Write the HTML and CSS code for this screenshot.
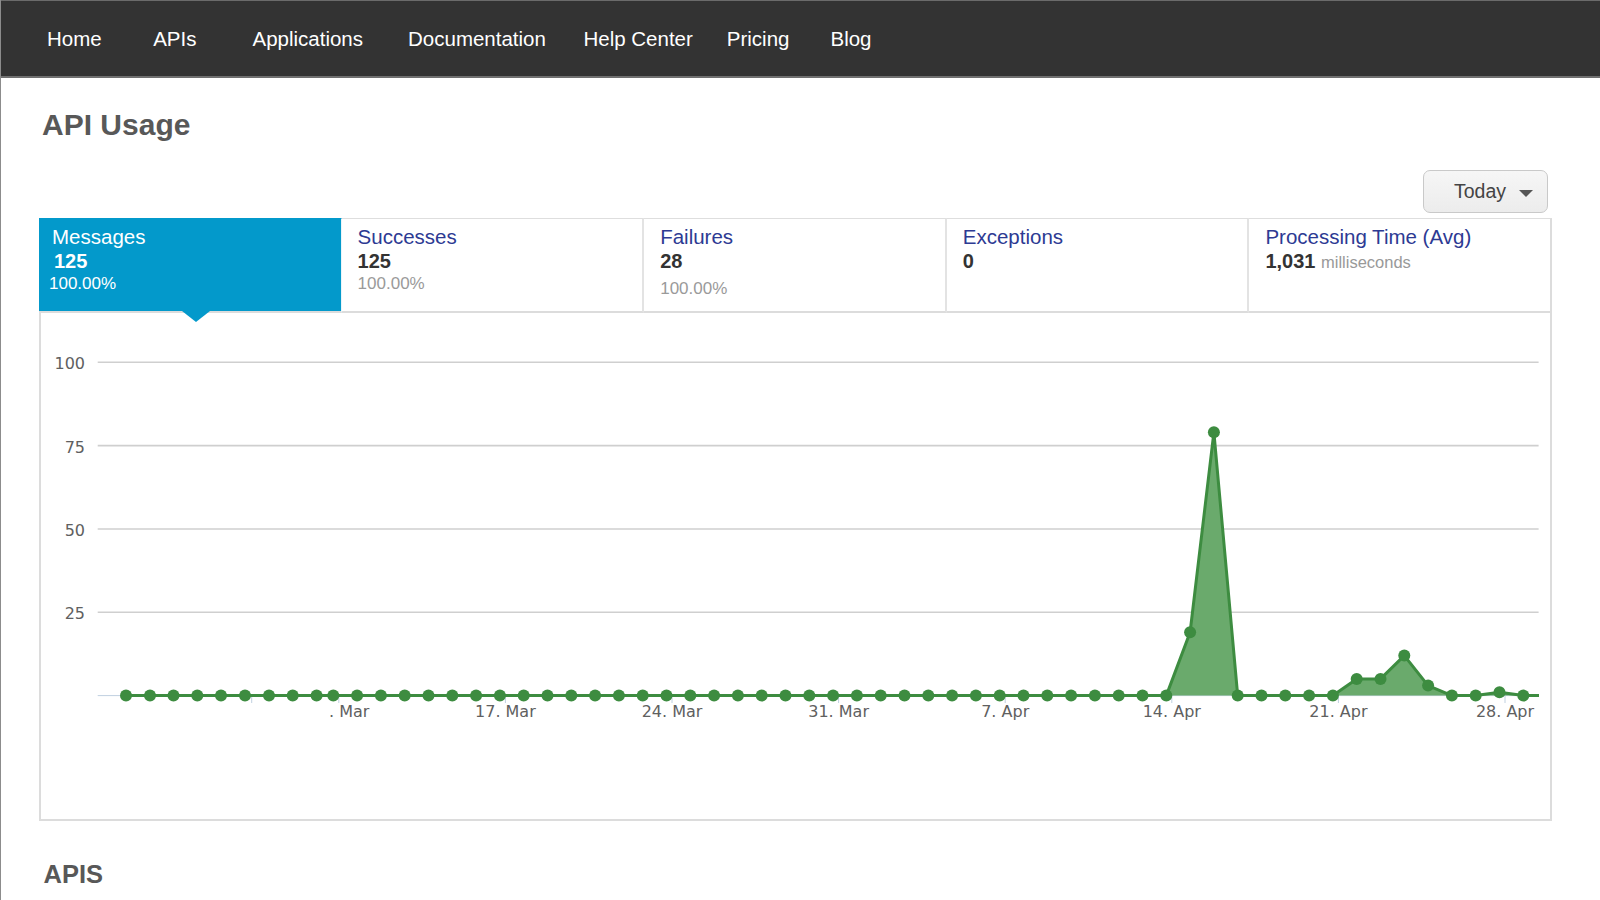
FILE: index.html
```html
<!DOCTYPE html>
<html lang="en">
<head>
<meta charset="utf-8">
<title>API Usage</title>
<link rel="stylesheet" href="styles.css">
</head>
<body>
<div class="page">
  <nav class="navbar">
    <a class="nav-link" href="#">Home</a>
    <a class="nav-link" href="#">APIs</a>
    <a class="nav-link" href="#">Applications</a>
    <a class="nav-link" href="#">Documentation</a>
    <a class="nav-link" href="#">Help Center</a>
    <a class="nav-link" href="#">Pricing</a>
    <a class="nav-link" href="#">Blog</a>
  </nav>

  <main class="content">
    <h1 class="page-title">API Usage</h1>

    <div class="toolbar">
      <button class="range-btn" type="button">Today <span class="caret"></span></button>
    </div>

    <section class="usage-panel">
      <div class="tabs">
        <div class="tab active">
          <div class="tab-title">Messages</div>
          <div class="tab-value">125</div>
          <div class="tab-pct">100.00%</div>
        </div>
        <div class="tab">
          <div class="tab-title">Successes</div>
          <div class="tab-value">125</div>
          <div class="tab-pct">100.00%</div>
        </div>
        <div class="tab tab-failures">
          <div class="tab-title">Failures</div>
          <div class="tab-value">28</div>
          <div class="tab-pct">100.00%</div>
        </div>
        <div class="tab">
          <div class="tab-title">Exceptions</div>
          <div class="tab-value">0</div>
        </div>
        <div class="tab">
          <div class="tab-title">Processing Time (Avg)</div>
          <div class="tab-value">1,031 <span class="tab-unit">milliseconds</span></div>
        </div>
      </div>

      <div class="chart-body">
        <svg class="chart" viewBox="41 313 1509 506" width="1509" height="506">
          <g class="grid">
            <line x1="97.7" y1="362.3" x2="1538.6" y2="362.3"/>
            <line x1="97.7" y1="445.6" x2="1538.6" y2="445.6"/>
            <line x1="97.7" y1="529" x2="1538.6" y2="529"/>
            <line x1="97.7" y1="612.3" x2="1538.6" y2="612.3"/>
          </g>
          <g class="axis-label y-labels">
            <text x="85" y="369.3">100</text>
            <text x="85" y="452.6">75</text>
            <text x="85" y="536">50</text>
            <text x="85" y="619.3">25</text>
          </g>
          <line class="x-axis" x1="97.7" y1="695.6" x2="1539" y2="695.6"/>
          <g class="ticks">
            <line x1="251.7" y1="695.6" x2="251.7" y2="703"/>
            <line x1="338.8" y1="695.6" x2="338.8" y2="703"/>
            <line x1="505.4" y1="695.6" x2="505.4" y2="703"/>
            <line x1="672" y1="695.6" x2="672" y2="703"/>
            <line x1="838.6" y1="695.6" x2="838.6" y2="703"/>
            <line x1="1005.2" y1="695.6" x2="1005.2" y2="703"/>
            <line x1="1171.8" y1="695.6" x2="1171.8" y2="703"/>
            <line x1="1338.4" y1="695.6" x2="1338.4" y2="703"/>
            <line x1="1505" y1="695.6" x2="1505" y2="703"/>
          </g>
          <g class="axis-label x-labels">
            <text x="329" y="716.7" class="start">. Mar</text>
            <text x="505.4" y="716.7">17. Mar</text>
            <text x="672" y="716.7">24. Mar</text>
            <text x="838.6" y="716.7">31. Mar</text>
            <text x="1005.2" y="716.7">7. Apr</text>
            <text x="1171.8" y="716.7">14. Apr</text>
            <text x="1338.4" y="716.7">21. Apr</text>
            <text x="1505" y="716.7">28. Apr</text>
          </g>
          <g class="area">
            <polygon points="1166.3,695.6 1190.1,632.3 1213.9,432.3 1237.7,695.6"/>
            <polygon points="1332.9,695.6 1356.7,678.9 1380.5,678.9 1404.3,655.6 1428.1,685.6 1451.9,695.6"/>
            <polygon points="1475.7,695.6 1499.5,692.3 1523.3,695.6"/>
          </g>
          <polyline class="series" points="126,695.6 1166.3,695.6 1190.1,632.3 1213.9,432.3 1237.7,695.6 1332.9,695.6 1356.7,678.9 1380.5,678.9 1404.3,655.6 1428.1,685.6 1451.9,695.6 1475.7,695.6 1499.5,692.3 1523.3,695.6 1539,695.6"/>
          <g class="dots">
            <circle cx="126" cy="695.6" r="6"/>
            <circle cx="150" cy="695.6" r="6"/>
            <circle cx="173.5" cy="695.6" r="6"/>
            <circle cx="197.3" cy="695.6" r="6"/>
            <circle cx="221" cy="695.6" r="6"/>
            <circle cx="245" cy="695.6" r="6"/>
            <circle cx="269" cy="695.6" r="6"/>
            <circle cx="292.7" cy="695.6" r="6"/>
            <circle cx="316.6" cy="695.6" r="6"/>
            <circle cx="333.3" cy="695.6" r="6"/>
            <circle cx="357.1" cy="695.6" r="6"/>
            <circle cx="380.9" cy="695.6" r="6"/>
            <circle cx="404.7" cy="695.6" r="6"/>
            <circle cx="428.5" cy="695.6" r="6"/>
            <circle cx="452.3" cy="695.6" r="6"/>
            <circle cx="476.1" cy="695.6" r="6"/>
            <circle cx="499.9" cy="695.6" r="6"/>
            <circle cx="523.7" cy="695.6" r="6"/>
            <circle cx="547.5" cy="695.6" r="6"/>
            <circle cx="571.3" cy="695.6" r="6"/>
            <circle cx="595.1" cy="695.6" r="6"/>
            <circle cx="618.9" cy="695.6" r="6"/>
            <circle cx="642.7" cy="695.6" r="6"/>
            <circle cx="666.5" cy="695.6" r="6"/>
            <circle cx="690.3" cy="695.6" r="6"/>
            <circle cx="714.1" cy="695.6" r="6"/>
            <circle cx="737.9" cy="695.6" r="6"/>
            <circle cx="761.7" cy="695.6" r="6"/>
            <circle cx="785.5" cy="695.6" r="6"/>
            <circle cx="809.3" cy="695.6" r="6"/>
            <circle cx="833.1" cy="695.6" r="6"/>
            <circle cx="856.9" cy="695.6" r="6"/>
            <circle cx="880.7" cy="695.6" r="6"/>
            <circle cx="904.5" cy="695.6" r="6"/>
            <circle cx="928.3" cy="695.6" r="6"/>
            <circle cx="952.1" cy="695.6" r="6"/>
            <circle cx="975.9" cy="695.6" r="6"/>
            <circle cx="999.7" cy="695.6" r="6"/>
            <circle cx="1023.5" cy="695.6" r="6"/>
            <circle cx="1047.3" cy="695.6" r="6"/>
            <circle cx="1071.1" cy="695.6" r="6"/>
            <circle cx="1094.9" cy="695.6" r="6"/>
            <circle cx="1118.7" cy="695.6" r="6"/>
            <circle cx="1142.5" cy="695.6" r="6"/>
            <circle cx="1166.3" cy="695.6" r="6"/>
            <circle cx="1190.1" cy="632.3" r="6"/>
            <circle cx="1213.9" cy="432.3" r="6"/>
            <circle cx="1237.7" cy="695.6" r="6"/>
            <circle cx="1261.5" cy="695.6" r="6"/>
            <circle cx="1285.3" cy="695.6" r="6"/>
            <circle cx="1309.1" cy="695.6" r="6"/>
            <circle cx="1332.9" cy="695.6" r="6"/>
            <circle cx="1356.7" cy="678.9" r="6"/>
            <circle cx="1380.5" cy="678.9" r="6"/>
            <circle cx="1404.3" cy="655.6" r="6"/>
            <circle cx="1428.1" cy="685.6" r="6"/>
            <circle cx="1451.9" cy="695.6" r="6"/>
            <circle cx="1475.7" cy="695.6" r="6"/>
            <circle cx="1499.5" cy="692.3" r="6"/>
            <circle cx="1523.3" cy="695.6" r="6"/>
          </g>
        </svg>
      </div>
    </section>

    <h2 class="section-title">APIS</h2>
  </main>
</div>
</body>
</html>
```

FILE: styles.css
```css
html, body {
  margin: 0;
  padding: 0;
  background: #fff;
}

body {
  font-family: "Liberation Sans", Arial, sans-serif;
  color: #333;
}

.page {
  border-left: 1px solid #8c8c8c;
  min-height: 900px;
  box-sizing: border-box;
}

/* ---------- top navigation ---------- */
.navbar {
  display: flex;
  height: 75px;
  background: #333;
  border-top: 1px solid #6b6b6b;
  border-bottom: 2px solid #707070;
  padding-left: 46px;
}

.nav-link {
  color: #fff;
  font-size: 20.5px;
  line-height: 75px;
  text-decoration: none;
  white-space: nowrap;
}

.nav-link:nth-child(2) { margin-left: 51.5px; }
.nav-link:nth-child(3) { margin-left: 56px; }
.nav-link:nth-child(4) { margin-left: 45px; }
.nav-link:nth-child(5) { margin-left: 37.5px; }
.nav-link:nth-child(6) { margin-left: 34px; }
.nav-link:nth-child(7) { margin-left: 41px; }

/* ---------- content ---------- */
.content {
  padding: 0 48px 0 38px;
}

.page-title {
  margin: 28.5px 0 0 3px;
  font-size: 30px;
  line-height: 36px;
  font-weight: bold;
  color: #585858;
}

.toolbar {
  display: flex;
  justify-content: flex-end;
  margin-top: 27.5px;
  margin-bottom: 5px;
  padding-right: 4px;
}

.range-btn {
  display: inline-flex;
  align-items: center;
  gap: 13px;
  height: 43px;
  padding: 0 14px 0 30px;
  border: 1px solid #c9c9c9;
  border-radius: 7px;
  background: linear-gradient(#f6f6f6, #ececec);
  font-family: "Liberation Sans", Arial, sans-serif;
  font-size: 19.5px;
  color: #444;
  cursor: pointer;
}

.caret {
  width: 0;
  height: 0;
  margin-top: 3px;
  border-left: 7.5px solid transparent;
  border-right: 7.5px solid transparent;
  border-top: 7.5px solid #555;
}

/* ---------- usage panel ---------- */
.tabs {
  display: grid;
  grid-template-columns: repeat(5, minmax(0, 1fr));
}

.tab {
  position: relative;
  height: 95px;
  box-sizing: border-box;
  padding: 7px 0 0 16px;
  border-top: 1px solid #dedede;
  border-right: 2px solid #e3e3e3;
  border-bottom: 2px solid #dcdcdc;
}

.tab:last-child {
  border-right-color: #dcdcdc;
}

.tab.active {
  background: #0399cb;
  border-top-color: #0399cb;
  border-right: 1px solid #e9f4f9;
  padding-left: 13px;
}

.tab.active::after {
  content: "";
  position: absolute;
  top: 100%;
  left: calc(50% - 8px);
  width: 0;
  height: 0;
  border-left: 14px solid transparent;
  border-right: 14px solid transparent;
  border-top: 11px solid #0399cb;
  z-index: 2;
}

.tab-title {
  font-size: 20.5px;
  line-height: 22px;
  color: #2d3a93;
  white-space: nowrap;
}

.tab-value {
  font-size: 20px;
  line-height: 26px;
  font-weight: bold;
  color: #333;
  white-space: nowrap;
}

.tab-unit {
  font-size: 16.5px;
  font-weight: normal;
  color: #999;
}

.tab-pct {
  font-size: 17px;
  line-height: 20px;
  color: #9a9a9a;
}

.tab.active .tab-title,
.tab.active .tab-value,
.tab.active .tab-pct {
  color: #fff;
}

.tab.active .tab-value { margin-left: 2px; }
.tab.active .tab-pct { margin-left: -3px; }
.tab-failures .tab-pct { margin-top: 5px; }

.chart-body {
  height: 506px;
  border: 2px solid #dcdcdc;
  border-top: none;
}

.chart {
  display: block;
  width: 1509px;
  height: 506px;
}

.grid line {
  stroke: #cfcfcf;
  stroke-width: 1.6;
}

.x-axis {
  stroke: #c0d0e0;
  stroke-width: 1;
}

.ticks line {
  stroke: #c0d0e0;
  stroke-width: 1;
}

.axis-label {
  font-family: "DejaVu Sans", Verdana, sans-serif;
  font-size: 16px;
  fill: #606060;
}

.y-labels text {
  text-anchor: end;
}

.x-labels text {
  text-anchor: middle;
}

.x-labels text.start {
  text-anchor: start;
}

.area polygon {
  fill: #6aaa6c;
}

.series {
  fill: none;
  stroke: #3d8c40;
  stroke-width: 3;
  stroke-linejoin: round;
}

.dots circle {
  fill: #3d8c40;
}

.section-title {
  margin: 37.5px 0 0 4.5px;
  font-size: 25.5px;
  line-height: 30px;
  font-weight: bold;
  color: #585858;
}
```
